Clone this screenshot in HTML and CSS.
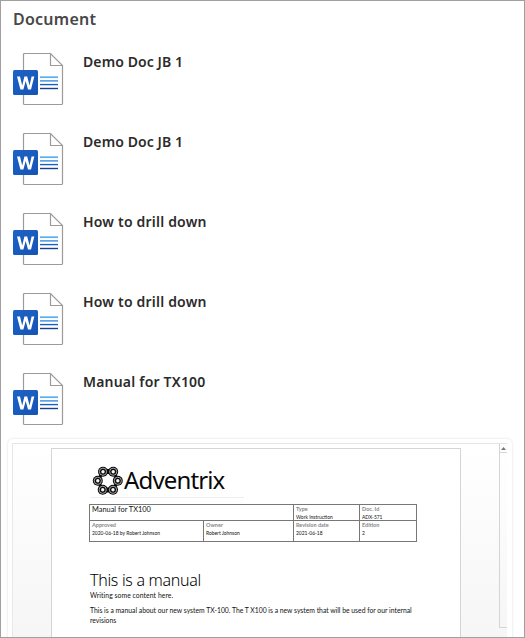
FILE: index.html
```html
<!DOCTYPE html>
<html lang="en">
<head>
<meta charset="utf-8">
<title>Document</title>
<link rel="stylesheet" href="styles.css">
</head>
<body>
<svg width="0" height="0" class="defs">
  <defs>
    <linearGradient id="blue" x1="0" y1="0" x2="1" y2="1"><stop stop-color="#1d63c8"/><stop offset="1" stop-color="#1653b5"/></linearGradient>
    <symbol id="word" viewBox="0 0 52 54">
      <path d="M11.5 1.5H37.5L49.5 13.5V51.5Q49.5 52.5 48.5 52.5H11.5Q10.5 52.5 10.5 51.5V2.5Q10.5 1.5 11.5 1.5Z" fill="#fff" stroke="#9b9b9b" stroke-width="1.2"/>
      <path d="M37.5 1.5V13.5H49.5" fill="none" stroke="#9b9b9b" stroke-width="1.2"/>
      <path d="M27 25.2H45" stroke="#5db2f3" stroke-width="1.8"/>
      <path d="M27 28.9H45" stroke="#3a8de0" stroke-width="1.4"/>
      <path d="M27 32.6H45" stroke="#1b5fc4" stroke-width="1.4"/>
      <path d="M27 36.5H45" stroke="#153f8c" stroke-width="1.4"/>
      <rect x="0" y="18" width="25" height="25" rx="1.5" fill="url(#blue)"/>
      <path d="M4 24.5H7L9.2 33.5L11.4 24.5H14.2L16.5 33.5L18.6 24.5H21.3L18 37.5H15L12.7 29L10.4 37.5H7.4Z" fill="#fff"/>
    </symbol>
  </defs>
</svg>
<main class="panel">
  <h1 class="heading">Document</h1>
  <ul class="list">
    <li class="item"><svg class="icon"><use href="#word"/></svg><span class="name">Demo Doc JB 1</span></li>
    <li class="item"><svg class="icon"><use href="#word"/></svg><span class="name">Demo Doc JB 1</span></li>
    <li class="item"><svg class="icon"><use href="#word"/></svg><span class="name wide">How to drill down</span></li>
    <li class="item"><svg class="icon"><use href="#word"/></svg><span class="name wide">How to drill down</span></li>
    <li class="item"><svg class="icon"><use href="#word"/></svg><span class="name wide">Manual for TX100</span></li>
  </ul>
  <section class="card">
    <div class="viewer">
      <article class="page">
        <header class="brand">
          <svg class="mark" viewBox="0 0 32 30">
            <path d="M11 5.5L5.8 14.8M21.5 5.5L26 14.8L21 24M10.7 24L5.8 14.8" fill="none" stroke="#080808" stroke-width="3"/>
            <path d="M11 5.5H21.5M10.7 24H21" stroke="#080808" stroke-width="5"/>
            <g fill="#080808"><circle cx="11" cy="5.7" r="5"/><circle cx="21.2" cy="5.7" r="5"/><circle cx="25.8" cy="14.8" r="5"/><circle cx="21" cy="23.8" r="5"/><circle cx="10.7" cy="23.8" r="5"/><circle cx="5.8" cy="14.8" r="5"/></g>
            <g fill="none" stroke="#ccc" stroke-width=".8"><circle cx="11" cy="5.7" r="3.6"/><circle cx="21.2" cy="5.7" r="3.6"/><circle cx="25.8" cy="14.8" r="3.6"/><circle cx="21" cy="23.8" r="3.6"/><circle cx="10.7" cy="23.8" r="3.6"/><circle cx="5.8" cy="14.8" r="3.6"/></g>
            <g fill="#f4f4f4"><circle cx="11" cy="5.7" r="1.7"/><circle cx="21.2" cy="5.7" r="1.7"/><circle cx="25.8" cy="14.8" r="1.7"/><circle cx="21" cy="23.8" r="1.7"/><circle cx="10.7" cy="23.8" r="1.7"/><circle cx="5.8" cy="14.8" r="1.7"/></g>
          </svg>
          <span class="wordmark">Adventrix</span>
        </header>
        <div class="meta">
          <div class="cell title">Manual for TX100</div>
          <div class="cell"><b>Type</b><span>Work Instruction</span></div>
          <div class="cell"><b>Doc. Id</b><span>ADX-571</span></div>
          <div class="cell"><b>Approved</b><span>2020-06-18 by Robert Johnson</span></div>
          <div class="cell"><b>Owner</b><span>Robert Johnson</span></div>
          <div class="cell"><b>Revision date</b><span>2021-06-18</span></div>
          <div class="cell"><b>Edition</b><span>2</span></div>
        </div>
        <h2 class="doc-title">This is a manual</h2>
        <p class="lead">Writing some content here.</p>
        <p class="text">This is a manual about our new system TX-100. The T X100 is a new system that will be used for our internal<br>revisions</p>
      </article>
      <div class="scroll"><div class="up"><svg width="5" height="3" viewBox="0 0 5 3"><path d="M0 3L2.5 0L5 3Z" fill="#777"/></svg></div></div>
    </div>
  </section>
</main>
</body>
</html>
```
FILE: styles.css
```css
* { box-sizing: border-box; margin: 0; padding: 0; }
html, body { width: 525px; height: 638px; overflow: hidden; background: #fff; }
.defs { position: absolute; }
.panel { height: 638px; border: 1px solid #a0a0a0; overflow: hidden; font-family: "Noto Sans", sans-serif; }
.heading { height: 40px; padding: 6px 0 0 12px; font-size: 16px; line-height: 24px; font-weight: 600; letter-spacing: .25px; color: #484848; white-space: nowrap; }
.list { list-style: none; }
.item { display: flex; height: 80px; padding: 11px 0 0 12px; }
.icon { width: 52px; height: 54px; }
.name { margin-left: 18px; font-size: 14px; line-height: 20px; font-weight: 600; letter-spacing: .1px; color: #2b2b2b; white-space: nowrap; }
.wide { letter-spacing: .2px; }
.card { width: 504px; height: 220px; margin: -2px 0 0 7px; padding: 4px; border-radius: 5px; background: #fff; box-shadow: 0 0 3px #ddd; }
.viewer { display: flex; width: 495px; height: 216px; border-top: 1px solid #e5e5e5; border-left: 1px solid #e8e8e8; background: linear-gradient(#fff, #f5f5f5); padding-left: 38px; }
.page { width: 410px; height: 210px; margin-top: 4px; padding: 0 0 0 38px; border: 1px solid #d5d5d5; background: #fff; font-family: Lato, sans-serif; color: #111; }
.brand { display: flex; width: 154px; height: 49px; padding: 17px 0 0 2px; border-bottom: 1px solid #eee; }
.mark { flex: none; width: 32px; height: 30px; }
.wordmark { font-family: "Noto Sans", sans-serif; font-size: 24px; line-height: 28px; letter-spacing: -0.85px; color: #080808; white-space: nowrap; }
.meta { display: grid; width: 328px; margin: 6px 0 0 -1px; grid-template-columns: 114px 90px 66px 57px; grid-template-rows: 16px 21px; border: solid #777; border-width: 1px 0 0 1px; }
.cell { border: solid #777; border-width: 0 1px 1px 0; padding: 0 0 0 2px; font-size: 5px; line-height: 8px; white-space: nowrap; }
.cell b, .cell span { display: block; height: 8px; }
.cell span { font-size: 4.95px; }
.cell b { font-size: 5.5px; color: #888; }
.title { grid-column: span 2; font-size: 7.4px; line-height: 10px; }
.doc-title { margin-top: 28px; font-family: "Noto Sans", sans-serif; font-size: 16px; line-height: 20px; font-weight: 300; letter-spacing: -.3px; color: #000; white-space: nowrap; }
.lead, .text { font-size: 6.8px; line-height: 10px; white-space: nowrap; }
.lead { letter-spacing: .07px; }
.text { margin-top: 5px; }
.scroll { width: 8px; height: 184px; margin-left: 38px; border: solid #d5d5d5; border-width: 0 0 1px 1px; }
.up { display: flex; height: 9px; align-items: center; justify-content: center; border-bottom: 1px solid #d8d8d8; }
```
